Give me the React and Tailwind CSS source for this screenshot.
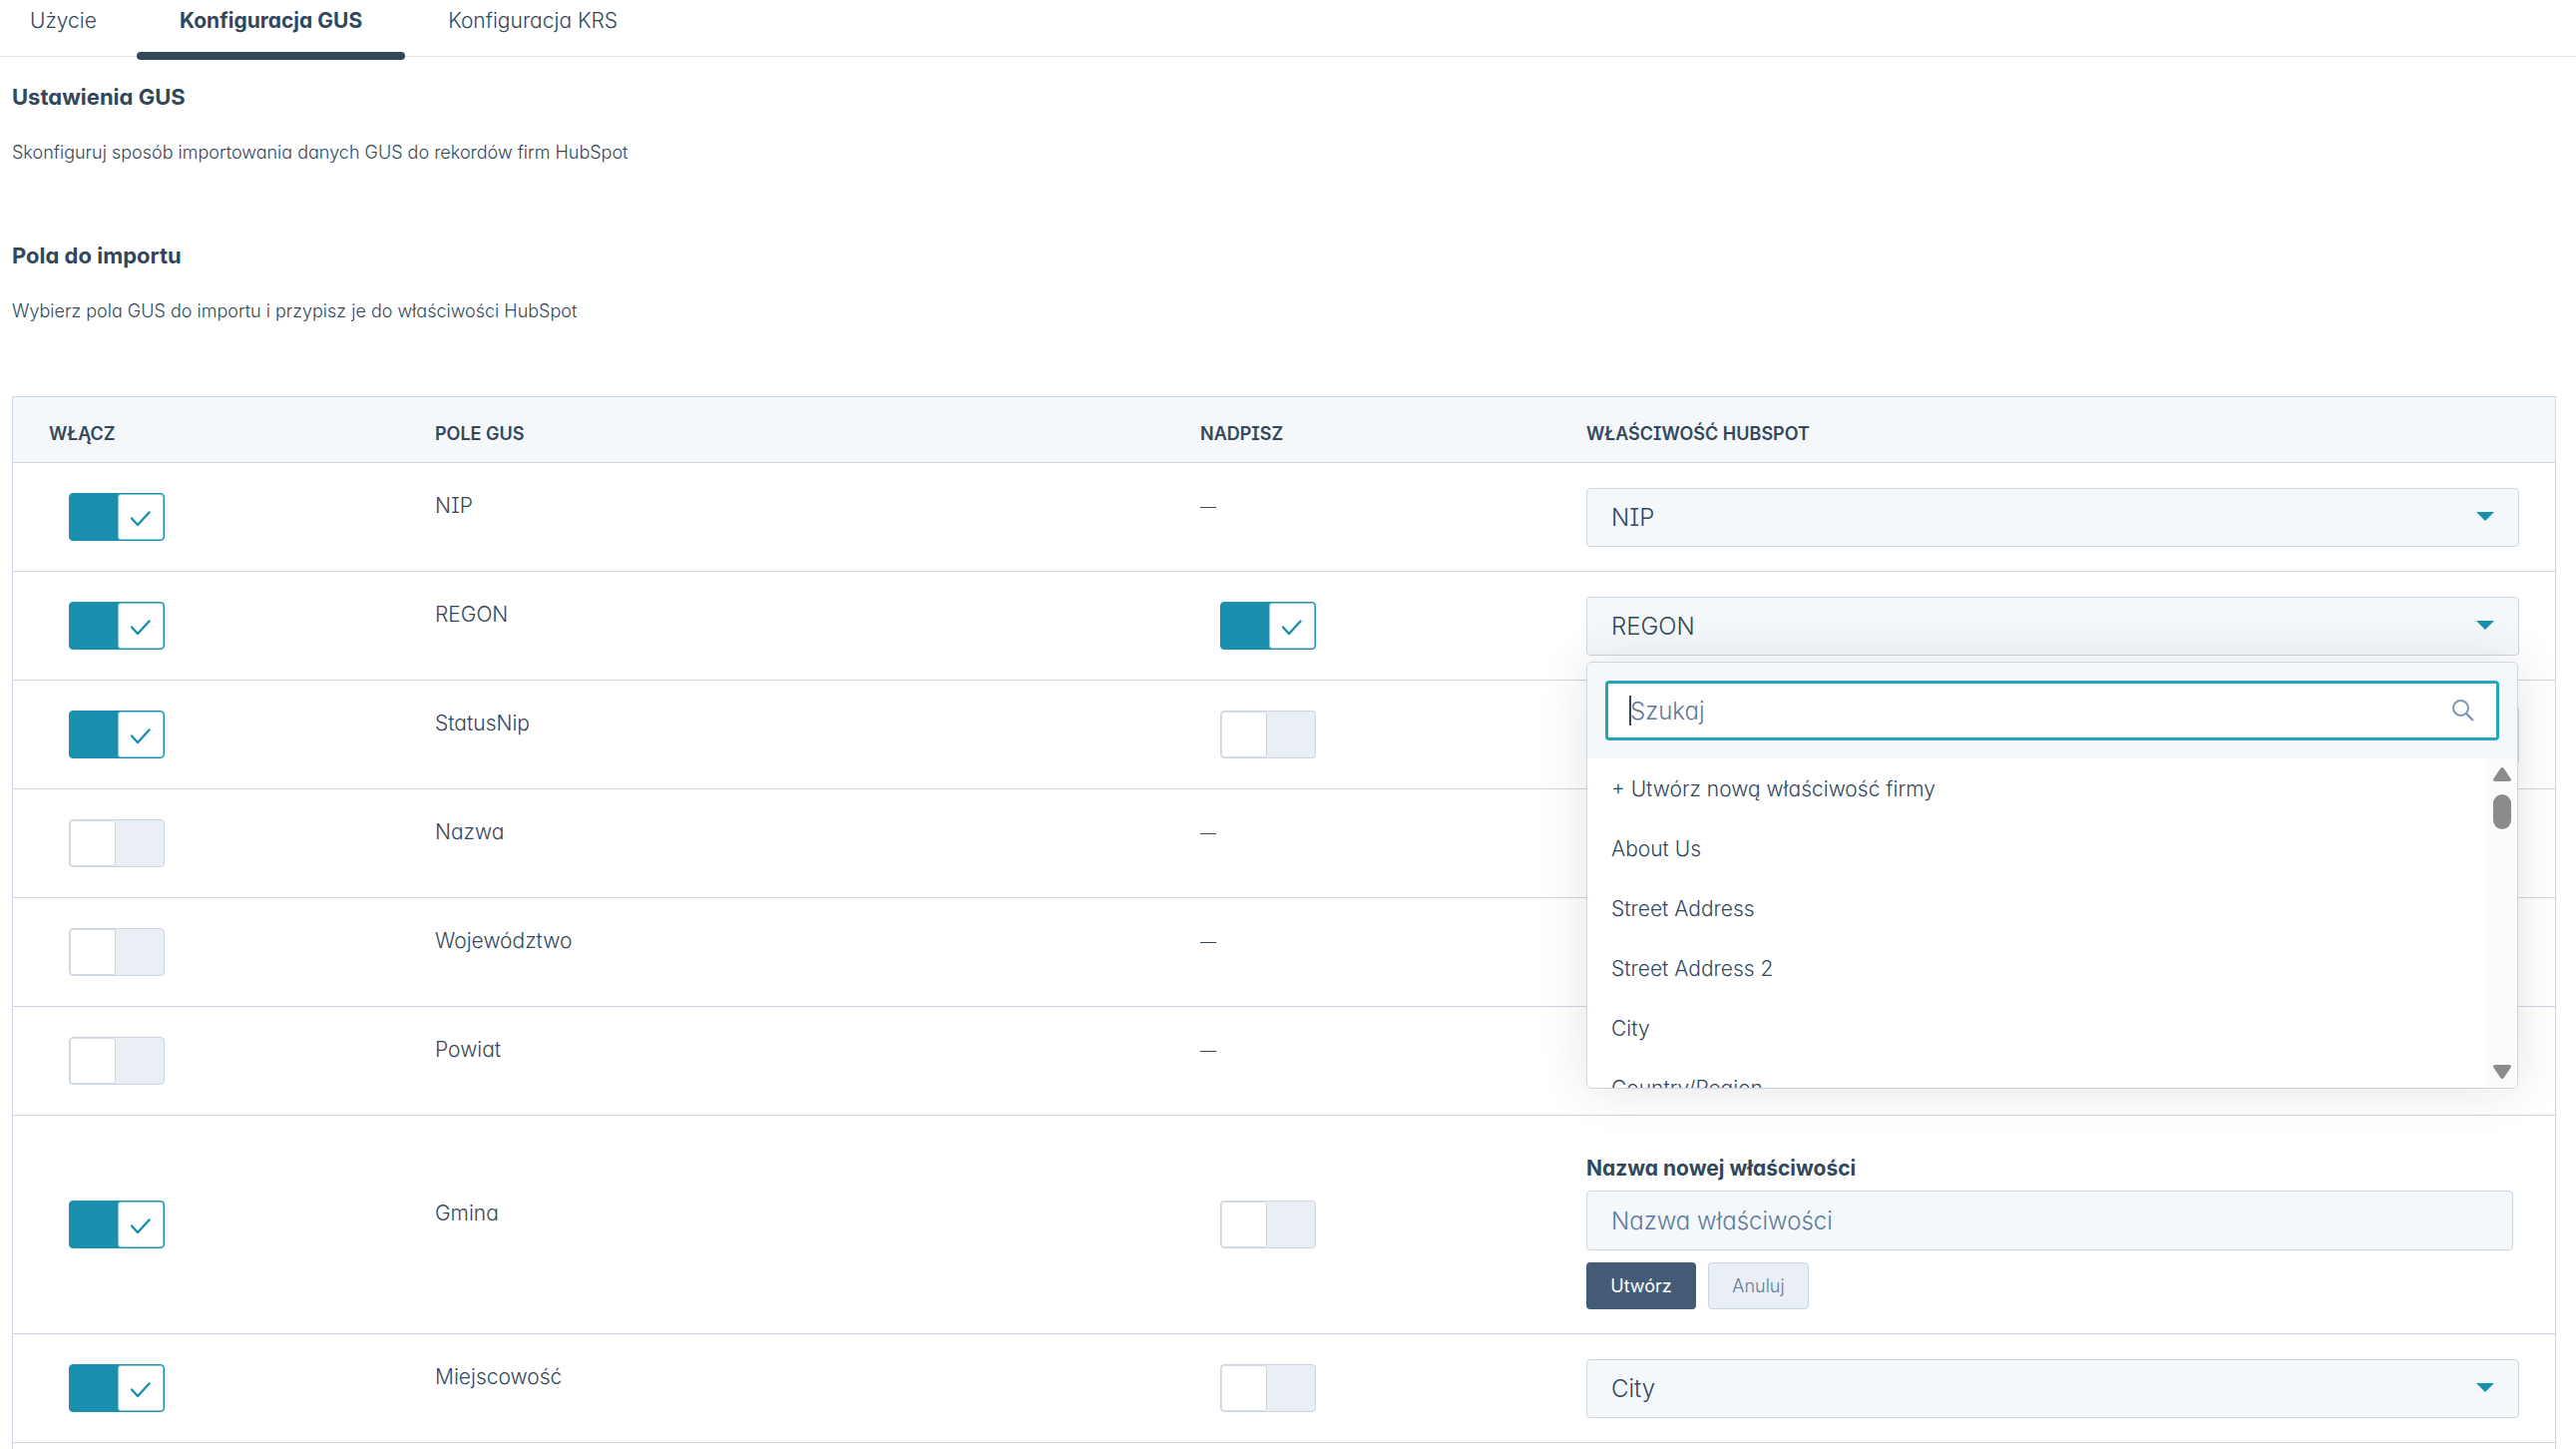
import React, { useState } from "react";
import clsx from "clsx";

const tabs = ["Użycie", "Konfiguracja GUS", "Konfiguracja KRS"];

const initialFields = [
  { name: "NIP", enabled: true, property: "NIP" },
  { name: "REGON", enabled: true, overwrite: true, property: "REGON" },
  { name: "StatusNip", enabled: true, overwrite: false, property: "" },
  { name: "Nazwa", enabled: false },
  { name: "Województwo", enabled: false },
  { name: "Powiat", enabled: false },
  { name: "Gmina", enabled: true, overwrite: false, creating: true },
  { name: "Miejscowość", enabled: true, overwrite: false, property: "City" },
];

const propertyOptions = [
  "+ Utwórz nową właściwość firmy",
  "About Us",
  "Street Address",
  "Street Address 2",
  "City",
  "Country/Region",
];

const Toggle = ({ label, checked, onChange }) => (
  <label className="relative ml-5 inline-flex h-12 w-24 cursor-pointer">
    <input
      type="checkbox"
      aria-label={label}
      checked={checked}
      onChange={onChange}
      className="peer sr-only"
    />
    <span
      className={clsx(
        "flex h-12 w-24 overflow-hidden rounded border",
        checked
          ? "justify-end border-[#1b90ae] bg-[#1b90ae]"
          : "justify-start border-[#cbd6e2] bg-[#eaeff6]"
      )}
    >
      <span
        className={clsx(
          "flex w-[46px] items-center justify-center rounded-[3px] border bg-white",
          checked ? "border-[#8dc8d7]" : "border-[#d5dde7] border-r-[#cbd6e2]"
        )}
      >
        {checked && (
          <svg width="20" height="16" viewBox="0 0 20 16" fill="none" className="mt-1">
            <path
              d="M1 7.5 L7 14 L18.500 1.500"
              stroke="#1b90ae"
              strokeWidth="2.400"
              strokeLinecap="round"
              strokeLinejoin="round"
            />
          </svg>
        )}
      </span>
    </span>
  </label>
);

const PropertySelect = ({ label, value, onChange }) => (
  <div className="relative">
    <select
      aria-label={label}
      value={value}
      onChange={onChange}
      className="block h-[59px] w-full appearance-none rounded border border-[#cbd6e2] bg-[#f5f8fb] px-6 text-2xl font-light text-[#33475b]"
    >
      <option>{value}</option>
    </select>
    <svg
      width="18"
      height="9"
      viewBox="0 0 18 9"
      className="pointer-events-none absolute right-[25px] top-6"
    >
      <path d="M0 0 H18 L9 9 Z" fill="#1b90ae" />
    </svg>
  </div>
);

const PropertyMenu = () => (
  <div className="absolute left-0 right-px top-full z-10 mt-[6px] overflow-hidden rounded-md border border-[#cbd6e2] bg-white shadow-[0_0_48px_rgba(45,45,45,0.13)]">
    <div className="bg-[#f5f8fb] p-[18px]">
      <div className="relative">
        <input
          type="text"
          aria-label="Szukaj"
          placeholder="Szukaj"
          className="block h-[60px] w-full rounded border-[3px] border-[#24a5bd] bg-white px-[22px] text-2xl font-light text-[#33475b] caret-transparent outline-none placeholder:text-[#5e7a9b]"
        />
        <span className="absolute left-6 top-[15px] h-[30px] w-0.5 bg-[#33475b]" />
        <svg
          width="24"
          height="24"
          viewBox="0 0 24 24"
          fill="none"
          className="absolute right-6 top-[18px]"
        >
          <circle cx="9.500" cy="9.500" r="7.500" stroke="#7c98b6" strokeWidth="2" />
          <path d="M15 15 L22 22" stroke="#7c98b6" strokeWidth="2.400" />
        </svg>
      </div>
    </div>
    <div className="flex h-[330px]">
      <ul className="h-full grow overflow-hidden">
        {propertyOptions.map((option) => (
          <li key={option} className="h-[60px] px-6 text-[21px] leading-[62px]">
            {option}
          </li>
        ))}
      </ul>
      {/* Scrollbar */}
      <div className="flex h-full w-[30px] flex-col items-center bg-[#fbfbfb] py-[9px]">
        <svg width="18" height="14" viewBox="0 0 18 14" fill="#8b8b8b">
          <path d="M7.300 1 Q9 -0.800 10.700 1 L17.600 11.300 Q18.500 14 16 14 H2 Q-0.500 14 0.400 11.300 Z" />
        </svg>
        <span className="mt-[13px] h-[35px] w-[18px] rounded-full bg-[#8b8b8b]" />
        <svg width="18" height="14" viewBox="0 0 18 14" fill="#8b8b8b" className="mt-auto">
          <path d="M7.300 13 Q9 14.800 10.700 13 L17.600 2.700 Q18.500 0 16 0 H2 Q-0.500 0 0.400 2.700 Z" />
        </svg>
      </div>
    </div>
  </div>
);

const NewPropertyForm = () => (
  <form className="pr-[6px] pt-[10px]" onSubmit={(e) => e.preventDefault()}>
    <label htmlFor="new-property" className="block h-10 text-[21px] font-bold leading-9">
      Nazwa nowej właściwości
    </label>
    <input
      id="new-property"
      type="text"
      placeholder="Nazwa właściwości"
      className="block h-[60px] w-full rounded border border-[#cbd6e2] bg-[#f5f8fb] px-6 text-2xl font-light text-[#33475b] placeholder:text-[#5e7a9b]"
    />
    <div className="mt-3 flex gap-3">
      <button
        type="submit"
        className="h-[47px] w-[110px] rounded bg-[#445b75] text-lg font-normal text-white"
      >
        Utwórz
      </button>
      <button
        type="button"
        className="h-[47px] w-[101px] rounded border border-[#cbd6e2] bg-[#eaeff6] text-lg font-light text-[#5e7a9b]"
      >
        Anuluj
      </button>
    </div>
  </form>
);

const cellStyle = "border-b border-[#cbd6e2] px-9 pb-6 pt-[25px] align-middle";
const headStyle =
  "h-[66px] border-b border-[#cbd6e2] bg-[#f5f8fb] px-9 pt-2 text-left text-lg font-semibold";

export default function App() {
  const [activeTab, setActiveTab] = useState("Konfiguracja GUS");
  const [fields, setFields] = useState(initialFields);
  const openMenu = "REGON";

  const updateField = (name, patch) =>
    setFields(fields.map((f) => (f.name === name ? { ...f, ...patch } : f)));

  return (
    <div className="h-screen overflow-hidden bg-white font-['Inter',sans-serif] font-light text-[#33475b] [font-feature-settings:'cv08','cv11']">
      {/* Tabs */}
      <nav className="flex h-[57px] border-b border-[#dfe3eb]">
        {tabs.map((tab, i) => (
          <button
            key={tab}
            type="button"
            onClick={() => setActiveTab(tab)}
            className={clsx(
              "relative h-[57px] whitespace-nowrap text-[21px] pb-4",
              i === 0 ? "pl-[30px] pr-10" : "px-[43px]",
              activeTab === tab && "font-bold"
            )}
          >
            {tab}
            {activeTab === tab && (
              <span className="absolute inset-x-0 top-[52px] h-2 rounded bg-[#33475b]" />
            )}
          </button>
        ))}
      </nav>

      <main className="pl-3 pr-5">
        <section className="pt-[22px]">
          <h2 className="text-[22px] font-bold leading-9">Ustawienia GUS</h2>
          <p className="mt-5 text-lg leading-9">
            Skonfiguruj sposób importowania danych GUS do rekordów firm HubSpot
          </p>
        </section>

        <section className="pt-[67px]">
          <h2 className="text-[22px] font-bold leading-9">Pola do importu</h2>
          <p className="mt-5 text-lg leading-9">
            Wybierz pola GUS do importu i przypisz je do właściwości HubSpot
          </p>
        </section>

        <div className="mt-[67px] border border-[#cbd6e2]">
          <table className="w-full table-fixed border-separate border-spacing-0">
            <thead>
              <tr>
                <th className={clsx(headStyle, "w-[387px]")}>WŁĄCZ</th>
                <th className={clsx(headStyle, "w-[767px]")}>POLE GUS</th>
                <th className={clsx(headStyle, "w-[387px]")}>NADPISZ</th>
                <th className={headStyle}>WŁAŚCIWOŚĆ HUBSPOT</th>
              </tr>
            </thead>
            <tbody>
              {fields.map((field) => (
                <tr key={field.name}>
                  <td className={cellStyle}>
                    <div className="h-[59px] pt-[5px]">
                      <Toggle
                        label={`Włącz ${field.name}`}
                        checked={field.enabled}
                        onChange={() => updateField(field.name, { enabled: !field.enabled })}
                      />
                    </div>
                  </td>
                  <td className={cellStyle}>
                    <div className="h-[59px] text-[21px] leading-9">{field.name}</div>
                  </td>
                  <td className={cellStyle}>
                    {field.overwrite === undefined ? (
                      <div className="h-[59px] text-base leading-9">—</div>
                    ) : (
                      <div className="h-[59px] pt-[5px]">
                        <Toggle
                          label={`Nadpisz ${field.name}`}
                          checked={field.overwrite}
                          onChange={() =>
                            updateField(field.name, { overwrite: !field.overwrite })
                          }
                        />
                      </div>
                    )}
                  </td>
                  <td className={cellStyle}>
                    {field.creating && <NewPropertyForm />}
                    {field.property !== undefined && (
                      <div className="relative">
                        <PropertySelect
                          label={`Właściwość HubSpot ${field.name}`}
                          value={field.property}
                          onChange={(e) =>
                            updateField(field.name, { property: e.target.value })
                          }
                        />
                        {openMenu === field.name && <PropertyMenu />}
                      </div>
                    )}
                  </td>
                </tr>
              ))}
              <tr>
                <td colSpan={4} className={cellStyle} />
              </tr>
            </tbody>
          </table>
        </div>
      </main>
    </div>
  );
}
